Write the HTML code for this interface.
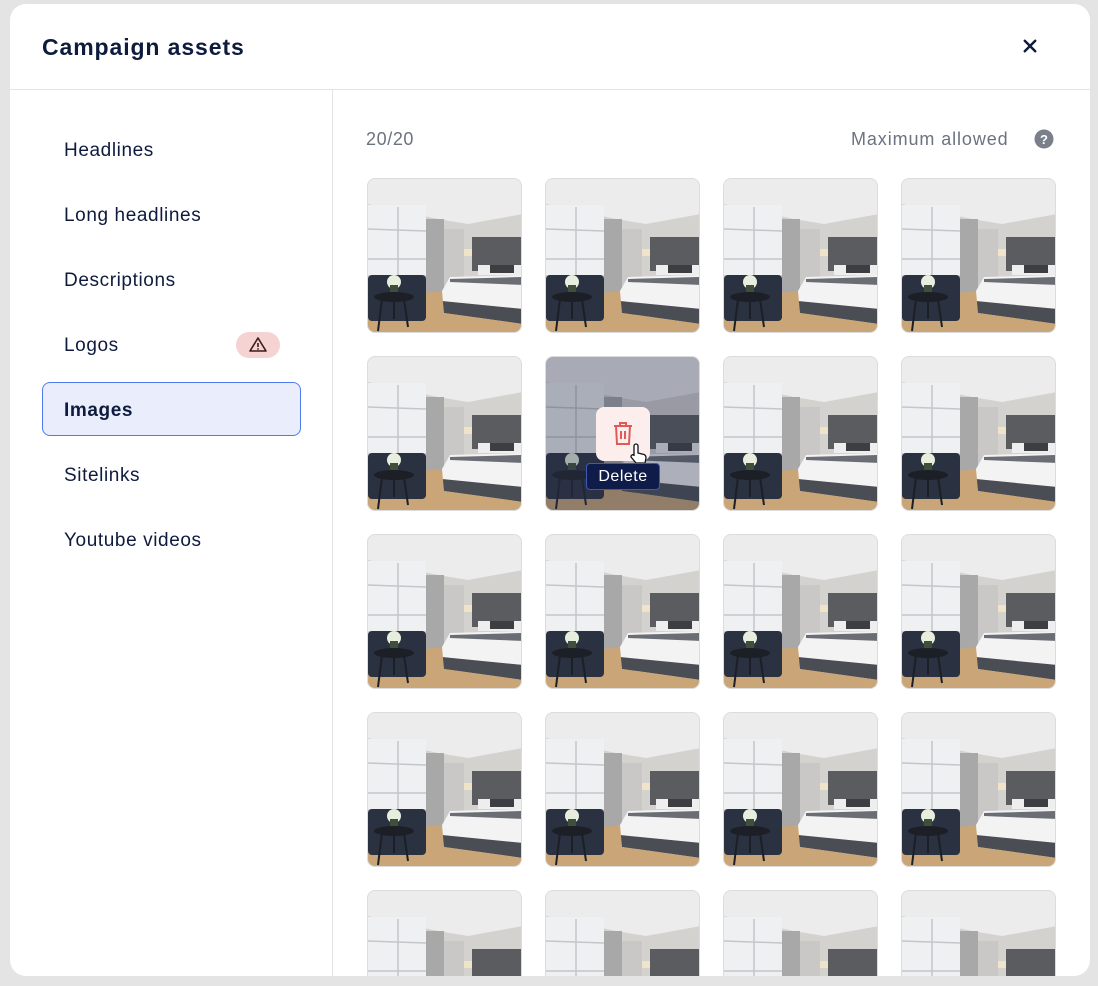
<!DOCTYPE html>
<html><head><style>
*{box-sizing:border-box;margin:0;padding:0}
body{width:1098px;height:986px;background:#e4e4e4;font-family:"Liberation Sans",sans-serif;overflow:hidden;position:relative}
.modal{position:absolute;left:10px;top:4px;width:1080px;height:972px;background:#fff;border-radius:16px;overflow:hidden}
.hdr{height:86px;border-bottom:1px solid #e2e4e8;position:relative}
.title{position:absolute;left:32px;top:30px;font-size:23px;font-weight:bold;color:#0f1b3d;letter-spacing:0.9px}
.close{position:absolute;left:1013px;top:35px}
.side{position:absolute;left:0;top:86px;width:323px;bottom:0;border-right:1px solid #e2e4e8}
.nav{position:absolute;left:54px;font-size:19px;color:#0f1b3d;letter-spacing:0.6px}
.sel{position:absolute;left:32px;top:292px;width:259px;height:54px;background:#eaeefc;border:1.5px solid #4f7bf0;border-radius:8px}
.badge{position:absolute;left:226px;top:242px;width:44px;height:26px;background:#f6d3d3;border-radius:13px}
.count{position:absolute;left:356px;top:125px;font-size:18px;color:#6b7280;letter-spacing:0.6px}
.max{position:absolute;left:841px;top:125px;font-size:18px;color:#6b7280;letter-spacing:0.9px}
.tile{position:absolute;width:155px;height:155px;border-radius:8px;overflow:hidden;border:1px solid #dcdcdc}
.tile svg{display:block}
</style></head><body>
<svg width="0" height="0" style="position:absolute"><defs>
<symbol id="room" viewBox="0 0 155 155">
<rect width="155" height="155" fill="#d4d2cf"/>
<polygon points="0,0 155,0 155,35 100,45 70,40 0,25" fill="#ececec"/>
<rect x="0" y="26" width="58" height="70" fill="#eef0f2"/>
<g stroke="#c4c6c9" stroke-width="1.5"><line x1="0" y1="50" x2="58" y2="52"/><line x1="0" y1="80" x2="58" y2="80"/><line x1="30" y1="28" x2="30" y2="96"/></g>
<rect x="58" y="40" width="18" height="75" fill="#a8a8a8"/>
<rect x="76" y="50" width="20" height="65" fill="#c9c8c6"/>
<rect x="104" y="58" width="51" height="34" fill="#5a5c5f"/>
<rect x="96" y="70" width="8" height="7" fill="#efe3c8"/>
<rect x="110" y="86" width="45" height="10" fill="#eeeeee"/>
<rect x="122" y="86" width="24" height="8" fill="#3c3e41"/>
<polygon points="74,112 82,98 155,96 155,132 74,124" fill="#f3f3f3"/>
<polygon points="82,100 155,98 155,106 82,103" fill="#6a6d74"/>
<polygon points="74,122 155,130 155,145 76,134" fill="#4a4d54"/>
<polygon points="0,120 74,112 76,134 155,145 155,155 0,155" fill="#c9a577"/>
<rect x="0" y="96" width="58" height="46" rx="4" fill="#2a3140"/>
<circle cx="26" cy="103" r="7" fill="#e7eedd"/><rect x="22" y="106" width="8" height="10" fill="#3f4f3a"/>
<ellipse cx="26" cy="118" rx="20" ry="5" fill="#1c1f26"/>
<g stroke="#1c1f26" stroke-width="2"><line x1="14" y1="120" x2="10" y2="152"/><line x1="36" y1="120" x2="40" y2="148"/><line x1="26" y1="122" x2="26" y2="140"/></g>
</symbol></defs></svg>
<div class="modal">
<div class="hdr"><div class="title">Campaign assets</div>
<svg class="close" width="14" height="14" viewBox="0 0 16 16"><path d="M2 2L14 14M14 2L2 14" stroke="#0f1b3d" stroke-width="2.8" stroke-linecap="round"/></svg></div>
<div class="side">
<div class="sel"></div>
<div class="nav" style="top:50px">Headlines</div>
<div class="nav" style="top:115px">Long headlines</div>
<div class="nav" style="top:180px">Descriptions</div>
<div class="nav" style="top:245px">Logos</div>
<div class="badge"><svg width="44" height="26" viewBox="0 0 44 26"><path d="M22 6L30 19H14Z" fill="none" stroke="#3a1a1a" stroke-width="1.6" stroke-linejoin="round"/><line x1="22" y1="11" x2="22" y2="15" stroke="#3a1a1a" stroke-width="1.6"/><circle cx="22" cy="17" r="0.9" fill="#3a1a1a"/></svg></div>
<div class="nav" style="top:310px;font-weight:bold">Images</div>
<div class="nav" style="top:375px">Sitelinks</div>
<div class="nav" style="top:440px">Youtube videos</div>
</div>
<div class="count">20/20</div>
<div class="max">Maximum allowed</div>
<svg style="position:absolute;left:1024px;top:125px" width="20" height="20" viewBox="0 0 20 20"><circle cx="10" cy="10" r="9.5" fill="#7a7f8a"/><text x="10" y="15" font-family="Liberation Sans" font-weight="bold" font-size="13" fill="#fff" text-anchor="middle">?</text></svg>
<div id="grid"></div>
<div style="position:absolute;left:586px;top:403px;width:54px;height:54px;background:#fdeeee;border-radius:8px"></div>
<svg style="position:absolute;left:603px;top:418px" width="20" height="24" viewBox="0 0 20 24"><path d="M1 4H19M7 4V1H13V4M3 4L4 22H16L17 4M8 9V17M12 9V17" fill="none" stroke="#e05a5a" stroke-width="2"/></svg>
<svg style="position:absolute;left:618px;top:438px" width="20" height="24" viewBox="0 0 20 24"><path d="M6 14V4a2 2 0 014 0v7l6 1.5c1.5.5 2 2 2 3.5l-1 5H8L3 15a2 2 0 013-2z" fill="#fff" stroke="#111" stroke-width="1.3"/></svg>
<div style="position:absolute;left:576px;top:459px;width:74px;height:27px;background:#0f1b48;border:1px solid #3d5bb5;border-radius:4px;color:#fff;font-size:16px;text-align:center;line-height:25px;letter-spacing:0.5px">Delete</div>
</div>
<script>
var g='';var xs=[357,535,713,891],ys=[174,352,530,708,886];
ys.forEach(function(y,r){xs.forEach(function(x,c){var dim=(r==1&&c==1);
g+='<div class="tile" style="left:'+x+'px;top:'+y+'px"><svg width="155" height="155"><use href="#room"/>'+(dim?'<rect width="155" height="155" fill="#2a3350" opacity="0.35"/>':'')+'</svg></div>';});});
var d=document.getElementById('grid');d.outerHTML=g;
</script>
</body></html>
